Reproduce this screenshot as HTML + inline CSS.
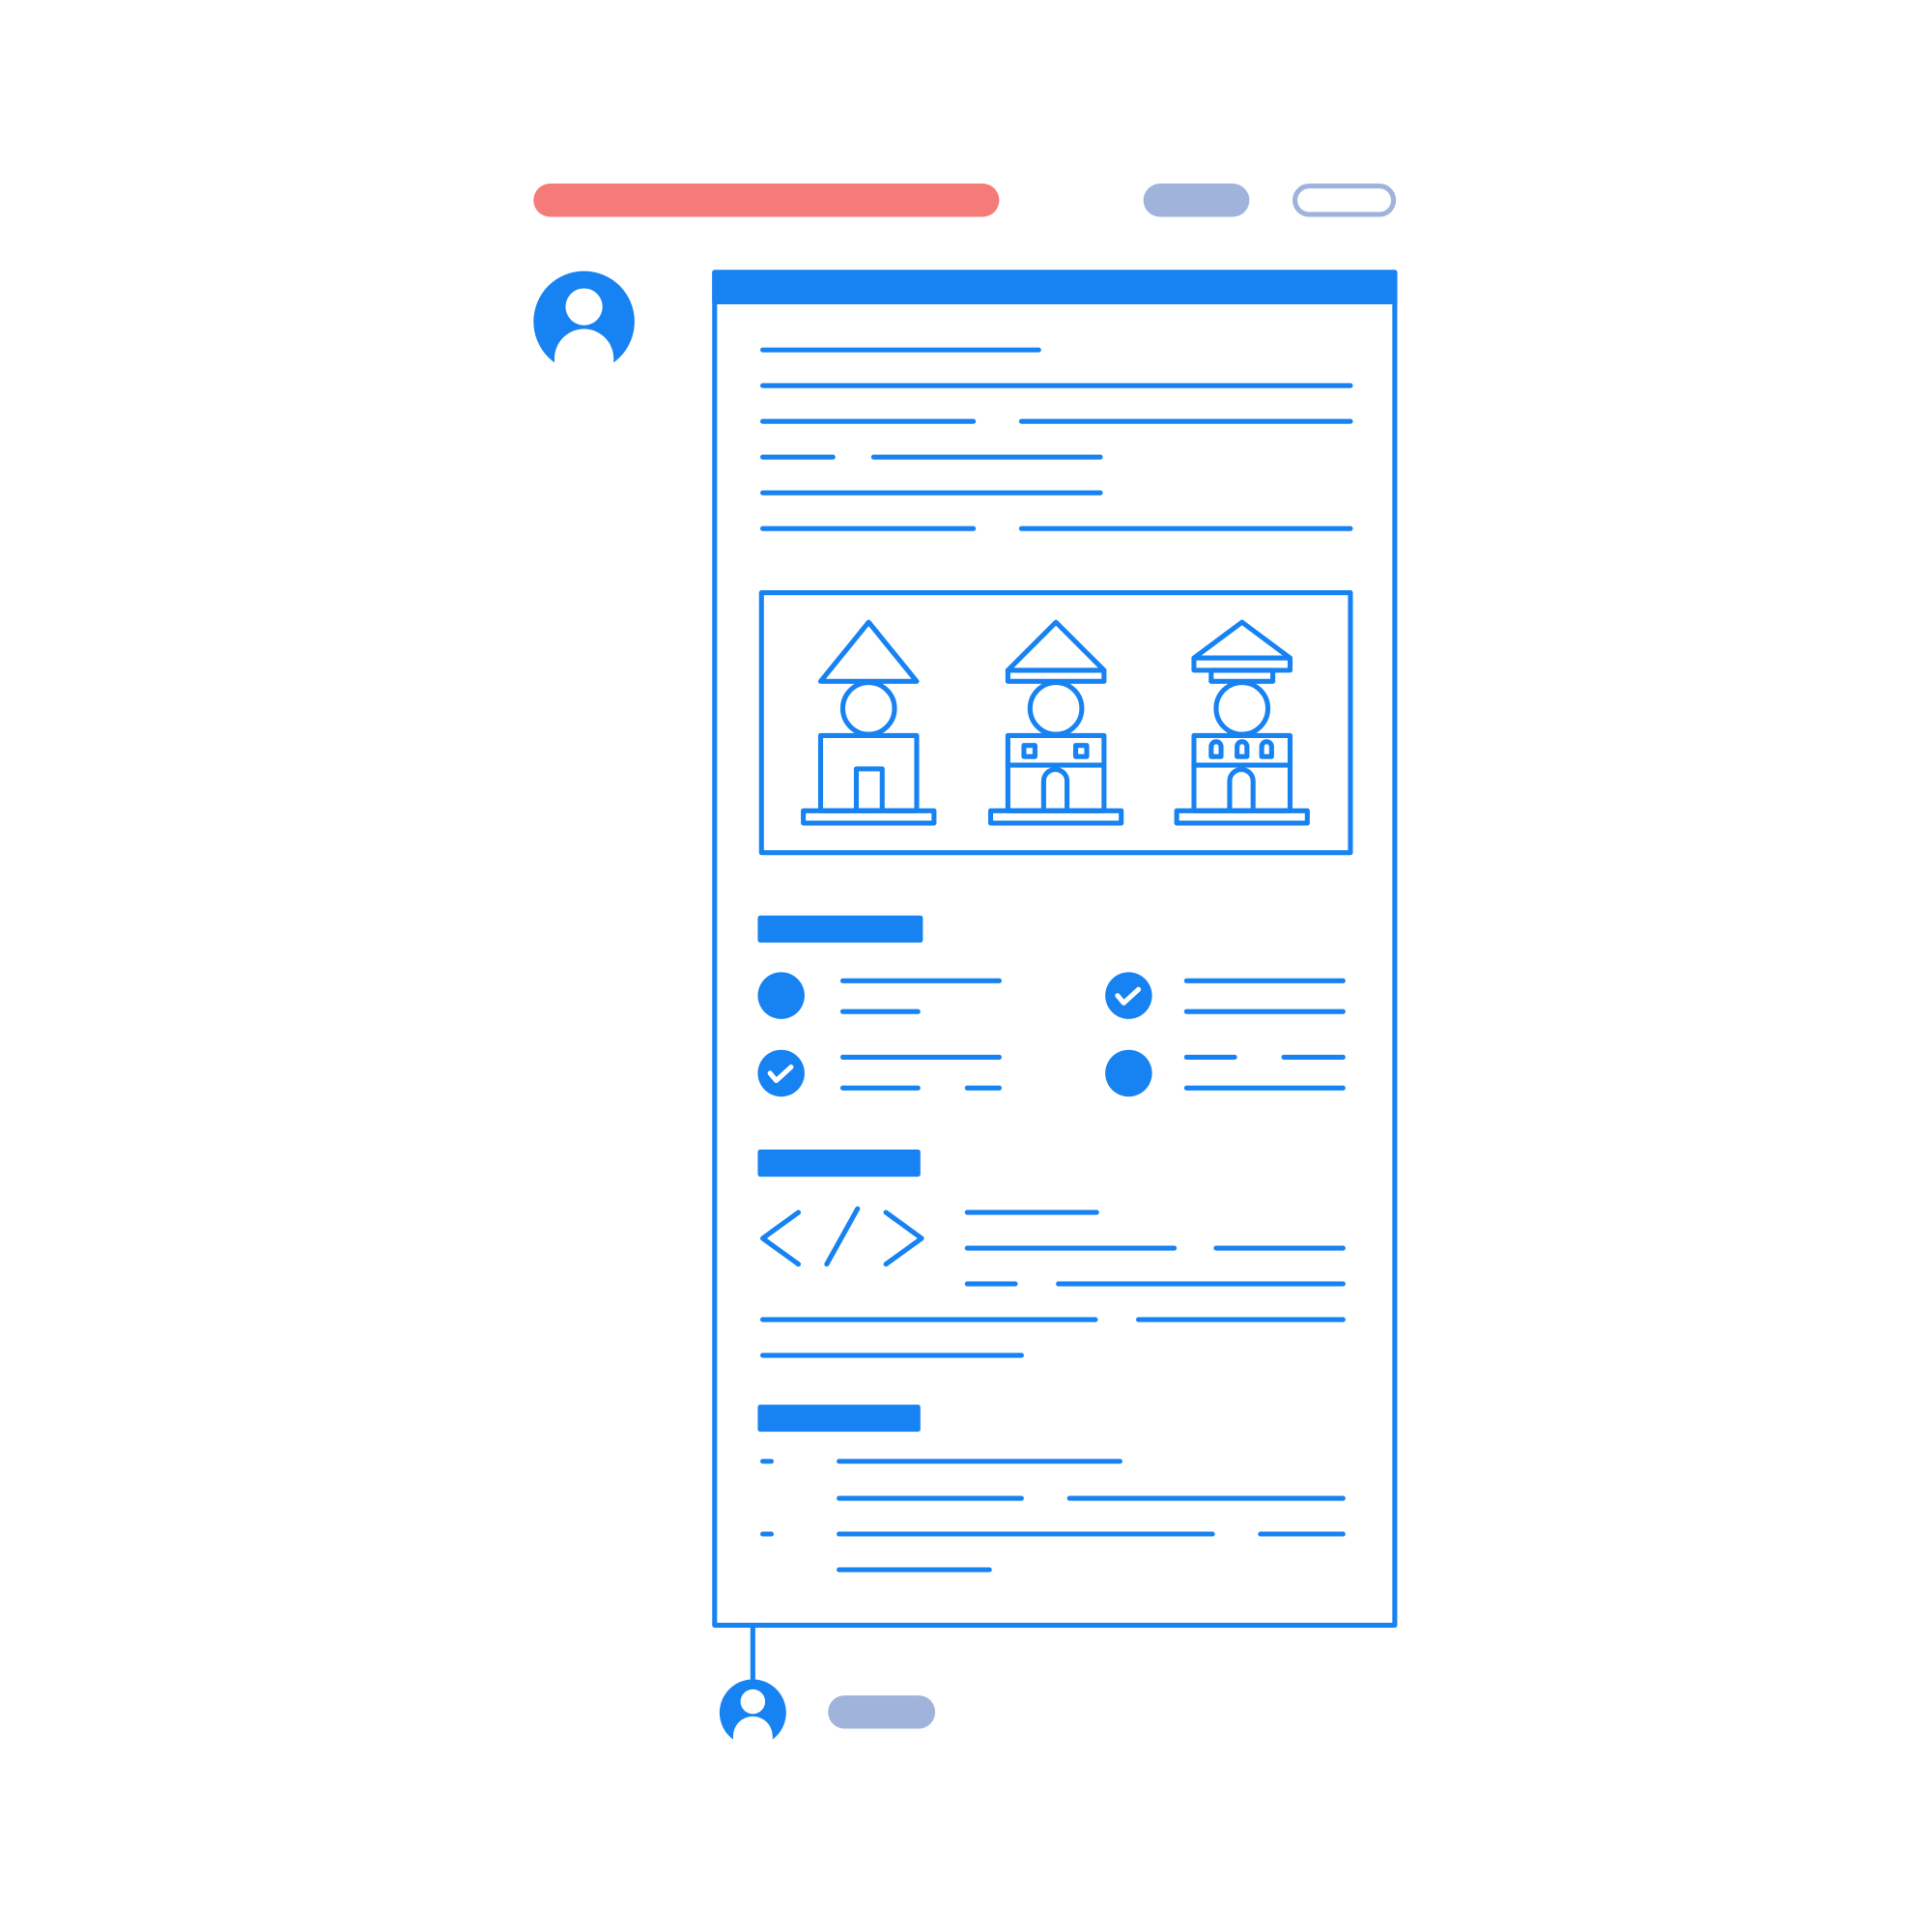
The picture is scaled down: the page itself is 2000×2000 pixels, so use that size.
<!DOCTYPE html>
<html><head><meta charset="utf-8"><style>html,body{margin:0;padding:0;background:#fff}svg{display:block}</style></head><body>
<svg width="2000" height="2000" viewBox="0 0 1568 1568" xmlns="http://www.w3.org/2000/svg">
<rect x="433" y="149" width="378" height="27" rx="13.5" fill="#F47B7A"/>
<rect x="928" y="149" width="86" height="27" rx="13.5" fill="#A0B3DB"/>
<rect x="1051" y="151" width="80" height="23" rx="11.5" fill="none" stroke="#A0B3DB" stroke-width="4"/>
<circle cx="474" cy="261" r="41" fill="#1782F1"/>
<circle cx="474" cy="249" r="15" fill="#fff"/>
<circle cx="474" cy="291" r="24" fill="#fff"/>
<rect x="450" y="291" width="48" height="14" fill="#fff"/>
<g fill="none" stroke="#1782F1" stroke-width="4" stroke-linecap="round" stroke-linejoin="round">
<rect x="580" y="221" width="552" height="1098"/>
<line x1="619" y1="284" x2="843" y2="284"/>
<line x1="619" y1="313" x2="1096" y2="313"/>
<line x1="619" y1="342" x2="790" y2="342"/><line x1="829" y1="342" x2="1096" y2="342"/>
<line x1="619" y1="371" x2="676" y2="371"/><line x1="709" y1="371" x2="893" y2="371"/>
<line x1="619" y1="400" x2="893" y2="400"/>
<line x1="619" y1="429" x2="790" y2="429"/><line x1="829" y1="429" x2="1096" y2="429"/>
<rect x="618" y="481" width="478" height="211"/>
<!-- building 1 -->
<polygon points="705,505 666,553 744,553"/>
<ellipse cx="705" cy="575" rx="21" ry="21"/>
<rect x="666" y="597" width="78" height="61"/>
<rect x="695" y="624" width="21" height="34"/>
<rect x="652" y="658" width="106" height="10"/>
<!-- building 2 -->
<polygon points="857,505 818,544 896,544"/>
<rect x="818" y="544" width="78" height="9"/>
<ellipse cx="857" cy="575" rx="21" ry="21"/>
<rect x="818" y="597" width="78" height="61"/>
<line x1="818" y1="621" x2="896" y2="621"/>
<rect x="831" y="605" width="9" height="9"/>
<rect x="873" y="605" width="9" height="9"/>
<path d="M847 658 V634 a9 9 0 0 1 19 0 V658"/>
<rect x="804" y="658" width="106" height="10"/>
<!-- building 3 -->
<polygon points="1008,505 969,534 1047,534"/>
<rect x="969" y="534" width="78" height="10"/>
<rect x="983" y="544" width="50" height="9"/>
<ellipse cx="1008" cy="575" rx="21" ry="21"/>
<rect x="969" y="597" width="78" height="61"/>
<line x1="969" y1="621" x2="1047" y2="621"/>
<path d="M983 614 V606 a4 4 0 0 1 8 0 V614 Z"/>
<path d="M1004 614 V606 a4 4 0 0 1 8 0 V614 Z"/>
<path d="M1024 614 V606 a4 4 0 0 1 8 0 V614 Z"/>
<path d="M998 658 V634 a9 9 0 0 1 19 0 V658"/>
<rect x="955" y="658" width="106" height="10"/>
<!-- list 1 -->
<line x1="684" y1="796" x2="811" y2="796"/><line x1="684" y1="821" x2="745" y2="821"/>
<line x1="963" y1="796" x2="1090" y2="796"/><line x1="963" y1="821" x2="1090" y2="821"/>
<line x1="684" y1="858" x2="811" y2="858"/><line x1="684" y1="883" x2="745" y2="883"/><line x1="785" y1="883" x2="811" y2="883"/>
<line x1="963" y1="858" x2="1002" y2="858"/><line x1="1042" y1="858" x2="1090" y2="858"/><line x1="963" y1="883" x2="1090" y2="883"/>
<!-- code -->
<polyline points="648,984 619,1005 648,1026"/>
<line x1="696" y1="981" x2="671" y2="1026"/>
<polyline points="719,984 748,1005 719,1026"/>
<line x1="785" y1="984" x2="890" y2="984"/>
<line x1="785" y1="1013" x2="953" y2="1013"/><line x1="987" y1="1013" x2="1090" y2="1013"/>
<line x1="785" y1="1042" x2="824" y2="1042"/><line x1="859" y1="1042" x2="1090" y2="1042"/>
<line x1="619" y1="1071" x2="889" y2="1071"/><line x1="924" y1="1071" x2="1090" y2="1071"/>
<line x1="619" y1="1100" x2="829" y2="1100"/>
<!-- list 3 -->
<line x1="619" y1="1186" x2="626" y2="1186"/><line x1="681" y1="1186" x2="909" y2="1186"/>
<line x1="681" y1="1216" x2="829" y2="1216"/><line x1="868" y1="1216" x2="1090" y2="1216"/>
<line x1="619" y1="1245" x2="626" y2="1245"/><line x1="681" y1="1245" x2="984" y2="1245"/><line x1="1023" y1="1245" x2="1090" y2="1245"/>
<line x1="681" y1="1274" x2="803" y2="1274"/>
<line x1="611" y1="1319" x2="611" y2="1363" stroke-linecap="butt"/>
</g>
<rect x="578" y="219" width="556" height="28" rx="2" fill="#1782F1"/>
<g fill="#1782F1">
<rect x="615" y="743" width="134" height="22" rx="2"/>
<rect x="615" y="933" width="132" height="22" rx="2"/>
<rect x="615" y="1140" width="132" height="22" rx="2"/>
<circle cx="634" cy="808" r="19"/>
<circle cx="916" cy="808" r="19"/>
<circle cx="634" cy="871" r="19"/>
<circle cx="916" cy="871" r="19"/>
</g>
<g fill="none" stroke="#fff" stroke-width="4" stroke-linecap="round" stroke-linejoin="round">
<polyline points="907,808 912,814 924,803"/>
<polyline points="625,871 630,877 642,866"/>
</g>
<circle cx="611" cy="1390" r="27" fill="#1782F1"/>
<circle cx="611" cy="1381" r="10" fill="#fff"/>
<circle cx="611" cy="1409" r="16" fill="#fff"/>
<rect x="595" y="1409" width="32" height="10" fill="#fff"/>
<rect x="672" y="1376" width="87" height="27" rx="13.5" fill="#A0B3DB"/>
</svg>
</body></html>
